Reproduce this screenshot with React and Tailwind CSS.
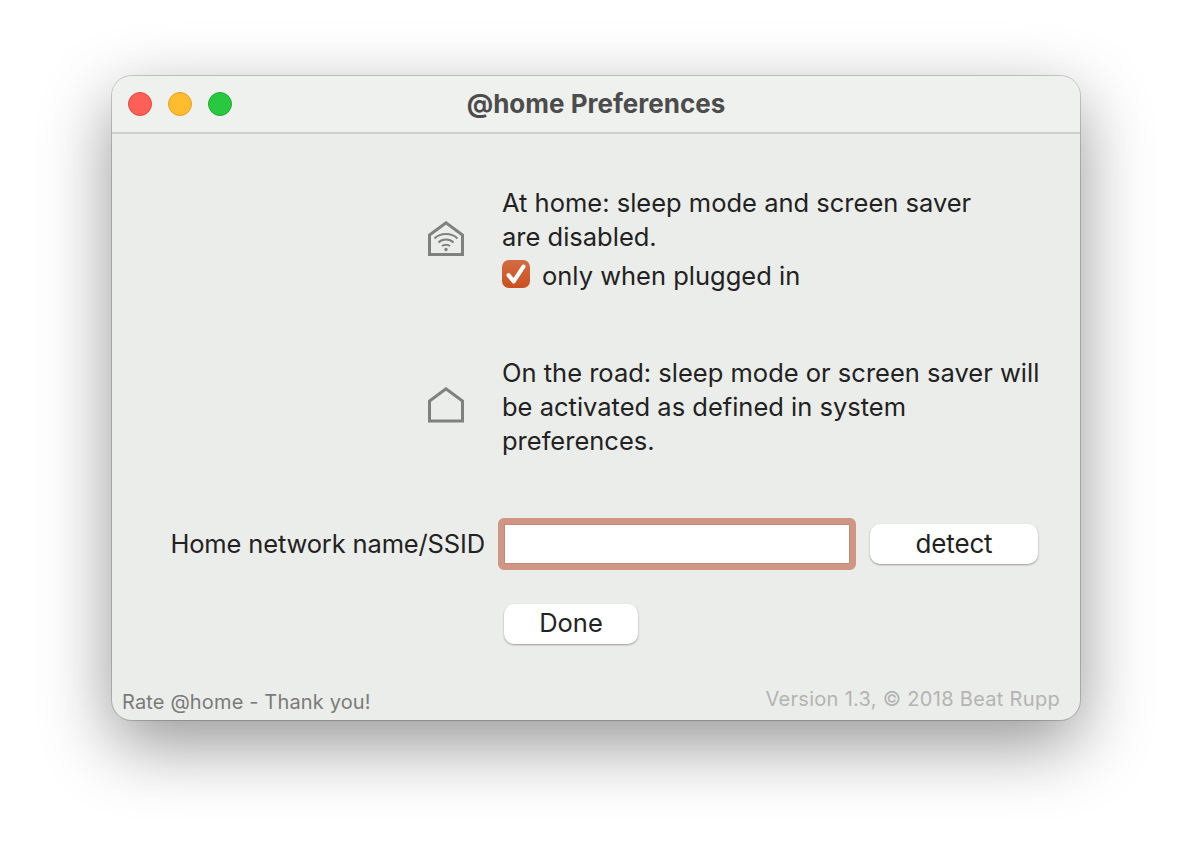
const font = { fontFamily: 'Inter, "Liberation Sans", sans-serif' }

function WifiHomeIcon() {
  return (
    <svg width="36" height="36" viewBox="0 0 36 36" fill="none" stroke="#7f817f">
      <path d="M1.5 33.5V14L18 1.8L34.5 14V33.5Z" strokeWidth="3" />
      <path d="M6.5 17.5C12.5 11.5 23.5 11.5 29.5 17.5" strokeWidth="2" />
      <path d="M10.5 21.5C14.5 17.5 21.5 17.5 25.5 21.5" strokeWidth="2" />
      <path d="M14 25C16 23.3 20 23.3 22 25" strokeWidth="2" />
      <circle cx="18" cy="28.5" r="1.7" fill="#7f817f" stroke="none" />
    </svg>
  )
}

function HomeIcon() {
  return (
    <svg width="36" height="36" viewBox="0 0 36 36" fill="none" stroke="#7f817f">
      <path d="M1.5 34V14L18 1.8L34.5 14V34Z" strokeWidth="3" />
    </svg>
  )
}

function App() {
  return (
    <div className="w-[1192px] h-[868px] bg-white overflow-hidden pt-[76px] pl-[112px]" style={font}>
      <div className="w-[968px] h-[644px] flex flex-col rounded-[20px] overflow-hidden bg-[#ebedea] shadow-[0_0_0_1px_rgba(0,0,0,0.18),0_24px_70px_rgba(0,0,0,0.42)] text-[#222222]">

        {/* Title bar */}
        <div className="h-[58px] shrink-0 grid grid-cols-[1fr_auto_1fr] items-center bg-[#eff1ee] border-b-2 border-[#cfd0ce]">
          <div className="flex gap-[16px] pl-[16px]">
            <div className="w-[24px] h-[24px] rounded-full bg-[#ff5f57] border border-[#e2463f]" />
            <div className="w-[24px] h-[24px] rounded-full bg-[#febc2e] border border-[#dfa023]" />
            <div className="w-[24px] h-[24px] rounded-full bg-[#28c840] border border-[#1fad2f]" />
          </div>
          <div className="text-[26px] font-bold text-[#4c4c4c] pb-[2px]">@home Preferences</div>
          <div />
        </div>

        <div className="flex-1 flex flex-col pt-[52px]">
          {/* At home */}
          <div className="flex items-center">
            <div className="w-[316px] shrink-0" />
            <div className="w-[36px] shrink-0 -mt-[2px]"><WifiHomeIcon /></div>
            <div className="ml-[38px] text-[25.5px] leading-[34px]">
              <div>At home: sleep mode and screen saver</div>
              <div>are disabled.</div>
              <div className="flex items-center gap-[12px] mt-[5px]">
                <div className="w-[28px] h-[28px] -mt-[4px] rounded-[7px] bg-gradient-to-b from-[#d46c41] to-[#c9501f] flex items-center justify-center">
                  <svg width="24" height="24" viewBox="0 0 21 21" fill="none" stroke="white" strokeWidth="3.6" strokeLinecap="round" strokeLinejoin="round">
                    <path d="M4 11.5L8.5 17L17 4" />
                  </svg>
                </div>
                <span>only when plugged in</span>
              </div>
            </div>
          </div>

          {/* On the road */}
          <div className="flex items-center mt-[63px]">
            <div className="w-[316px] shrink-0" />
            <div className="w-[36px] shrink-0 -mt-[5px]"><HomeIcon /></div>
            <div className="ml-[38px] w-[560px] text-[25.5px] leading-[34px]">
              On the road: sleep mode or screen saver will<br />
              be activated as defined in system<br />
              preferences.
            </div>
          </div>

          {/* SSID */}
          <div className="flex items-center mt-[60px] text-[25.5px] tracking-[-0.15px]">
            <div className="w-[373px] text-right shrink-0">Home network name/SSID</div>
            <div className="ml-[13px] w-[358px] h-[52px] rounded-[6px] bg-white border-[6px] border-[#cf9683] shadow-[inset_0_0_0_1px_#c08a78] shrink-0" />
            <button className="ml-[14px] w-[168px] h-[40px] pb-[2px] rounded-[10px] bg-white shadow-[0_1px_2px_rgba(0,0,0,0.35)] text-[26px]">detect</button>
          </div>

          <div className="flex mt-[34px]">
            <button className="ml-[392px] w-[134px] h-[40px] pb-[2px] rounded-[10px] bg-white shadow-[0_1px_2px_rgba(0,0,0,0.35)] text-[25.5px]">Done</button>
          </div>

          {/* Footer */}
          <div className="mt-auto flex justify-between items-end pl-[10px] pr-[20px] pb-[3px]">
            <span className="text-[20px] tracking-[0.15px] text-[#7a7b79]">Rate @home - Thank you!</span>
            <span className="text-[20px] tracking-[0.3px] text-[#b3b4b2] mb-[3px]">Version 1.3, © 2018 Beat Rupp</span>
          </div>
        </div>
      </div>
    </div>
  )
}

export default App
